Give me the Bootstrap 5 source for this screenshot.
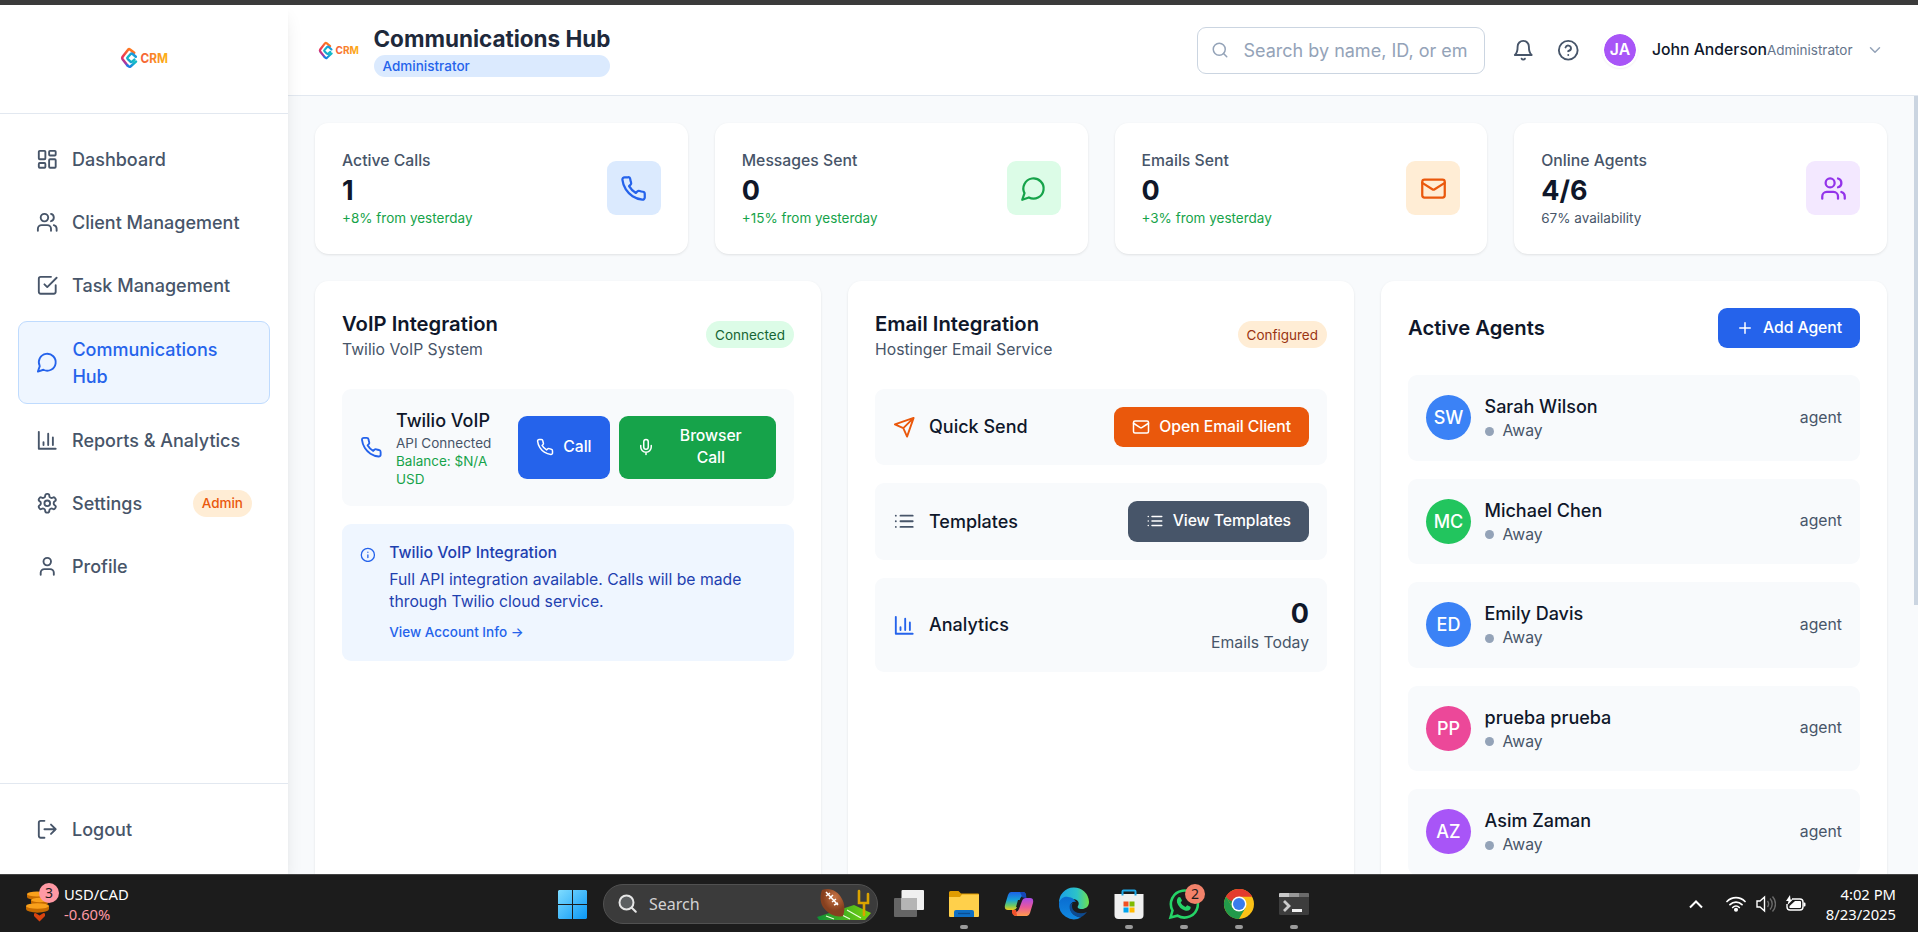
<!DOCTYPE html>
<html lang="en">
<head>
<meta charset="utf-8">
<meta name="viewport" content="width=device-width, initial-scale=1">
<title>Communications Hub</title>
<link rel="stylesheet" href="https://cdn.jsdelivr.net/npm/bootstrap@5.3.0/dist/css/bootstrap.min.css">
<style>
html{font-size:18px}
body{font-family:Inter,"Liberation Sans",sans-serif;height:932px;overflow:hidden;background:#f8fafc;color:#0f172a;line-height:1.5;font-size:18px}
.ico{width:22.5px;height:22.5px;fill:none;stroke:currentColor;stroke-width:2;stroke-linecap:round;stroke-linejoin:round;flex:none;display:block}
.ico-s{width:18px;height:18px}
.ico-l{width:27px;height:27px}
.frame-top{height:5px;background:#3b3b3b;flex:none}
.sidebar{width:288px;background:#fff;box-shadow:0 11px 17px -3px rgba(0,0,0,.1),0 4px 7px -4px rgba(0,0,0,.1);z-index:3;flex:none}
.side-head{height:109px;border-bottom:1px solid #e2e8f0;padding-bottom:2px}
.side-head svg{display:block}
.side-foot{border-top:1px solid #e2e8f0;padding:18px}
.side-nav{padding:18px;gap:9px}
.side-link{display:flex;align-items:center;gap:13.5px;padding:13.5px 18px;border-radius:9px;color:#475569;font-weight:500;text-decoration:none}
.side-link.active{background:#eff6ff;border:1px solid #bfdbfe;color:#2563eb;padding-left:17.4px}
.pill{font-size:13.5px;line-height:18px;padding:4.5px 9px;border-radius:99px;white-space:nowrap}
.pill-orange{background:#ffedd5;color:#ea580c}
.pill-brown{background:#ffedd5;color:#9a3412}
.pill-green{background:#dcfce7;color:#166534}
.topbar{height:91px;background:#fff;border-bottom:1px solid #e2e8f0;padding:0 34px 0 30px;flex:none}
.page-title{font-size:22.5px;line-height:31.5px;font-weight:700;color:#1e293b;margin:0;letter-spacing:-.02px}
.role{background:#dbeafe;color:#2563eb;font-size:13.5px;line-height:18px;font-weight:500;padding:2.25px 9px;border-radius:99px}
.search-box{width:288px;height:47px;border:1px solid #cbd5e1;border-radius:9px;color:#94a3b8;padding:0 0 0 13.5px}
.search-box span{white-space:nowrap;margin-left:.5px}
.me{width:36px;height:36px;border:2px solid #fff;border-radius:50%;background:#a855f7;background-clip:padding-box;color:#fff;font-size:15.75px;font-weight:600;box-shadow:0 1px 2px rgba(0,0,0,.06)}
.content{padding:27px;width:1626px;flex:none}
.panel{background:#fff;border-radius:13.5px;box-shadow:0 1px 3px rgba(0,0,0,.08),0 1px 2px -1px rgba(0,0,0,.08);padding:27px}
.grid4{display:grid;grid-template-columns:repeat(4,1fr);gap:27px}
.grid3{display:grid;grid-template-columns:repeat(3,1fr);gap:27px;margin-top:27px;height:800px}
.t-sm{font-size:15.75px;line-height:22.5px}
.t-xs{font-size:13.5px;line-height:18px}
.muted{color:#475569}
.big{font-size:27px;line-height:36px;font-weight:700}
.green{color:#16a34a}.blue{color:#2563eb}.orange{color:#ea580c}.purple{color:#9333ea}
.tile{width:54px;height:54px;border-radius:9px;display:grid;place-items:center}
.h-card{font-size:20.25px;line-height:31.5px;font-weight:600;margin:0}
.cell-row{background:#f8fafc;border-radius:9px;padding:18px;display:flex;align-items:center;justify-content:space-between}
.gap-x{gap:13.5px}
.bt{border-radius:9px;color:#fff;font-size:15.75px;line-height:22.5px;font-weight:500;padding:9px 18px;gap:9px;display:flex;align-items:center;border:0;white-space:nowrap;letter-spacing:-.07px}
.bt-blue{background:#2563eb}.bt-green{background:#16a34a;width:157.5px}.bt-orange{background:#ea580c}.bt-slate{background:#475569}
.info{background:#eff6ff;border-radius:9px;padding:18px 18px 20px;color:#1e40af}
.ava{width:45px;height:45px;border-radius:50%;color:#fff;font-weight:500;display:grid;place-items:center}
.dot{width:9px;height:9px;border-radius:50%;background:#94a3b8}
.thumb{width:4px;background:#cbd5e1;height:509px;flex:none}
.taskbar{height:58px;background:#1c1c1c;border-top:1px solid #434343;color:#fff;font-family:"Noto Sans","Open Sans",sans-serif;flex:none;z-index:5;font-size:15px;line-height:20px;padding-top:1px}
.tb-left{width:558px;padding-left:25px}
.tb-search{width:275px;height:40px;border-radius:20px;background:#3b3b3b;border:1px solid #515151;color:#d2d2d2;font-size:16px;padding:0 5px 0 14px;margin:0 16px}
.tb-app{width:30px;margin-right:25px;position:relative;height:57px;display:flex;align-items:center;justify-content:center}
.tb-app svg{width:30px;height:30px;overflow:visible}
.tb-app.run::after{content:"";position:absolute;bottom:4px;left:11px;width:8px;height:4px;border-radius:2px;background:#9a9a9a}
.count{position:absolute;width:20px;height:20px;border-radius:50%;color:#1c1c1c;font-size:14px;line-height:20px;text-align:center}
.cond{transform-origin:0 50%;transform:scaleX(.985);white-space:nowrap}
.cond-r{transform-origin:100% 50%}
</style>
</head>
<body class="d-flex flex-column">
<svg width="0" height="0" class="position-absolute" aria-hidden="true">
<defs>
<linearGradient id="lgA" gradientUnits="userSpaceOnUse" x1="3" y1="19" x2="12" y2="3"><stop offset="0" stop-color="#5b3ff0"/><stop offset=".4" stop-color="#e8325c"/><stop offset="1" stop-color="#ff7a1f"/></linearGradient>
<linearGradient id="lgB" gradientUnits="userSpaceOnUse" x1="7" y1="20" x2="16" y2="8"><stop offset="0" stop-color="#1f6fe8"/><stop offset=".6" stop-color="#10bfc4"/><stop offset="1" stop-color="#1e90e0"/></linearGradient>
<linearGradient id="lgT" gradientUnits="userSpaceOnUse" x1="20" y1="0" x2="48" y2="0"><stop offset="0" stop-color="#f4583a"/><stop offset="1" stop-color="#fdb515"/></linearGradient>
</defs>
<symbol id="crm" viewBox="0 0 48 22">
<path d="M14.200 5.800 10 2.500Q9 1.800 8.100 2.700L2.600 9.800Q1.800 11 2.600 12.200L7.300 18.200" fill="none" stroke="url(#lgA)" stroke-width="2.600" stroke-linejoin="round" stroke-linecap="round"/>
<path d="M15.800 9.800 12.400 6.800Q11.500 6.200 10.700 7L7.600 10.300Q6.900 11 7.600 11.800L10.500 14.700Q11.300 15.300 12.200 14.600L14.400 12.600M7.500 18.300 8.600 19.400Q9.500 20.200 10.500 19.500L16 14.600" fill="none" stroke="url(#lgB)" stroke-width="2.500" stroke-linejoin="round" stroke-linecap="round"/>
<text x="20.500" y="15.600" font-family="Inter,sans-serif" font-size="12.800" font-weight="700" textLength="27.500" lengthAdjust="spacingAndGlyphs" fill="url(#lgT)">CRM</text>
</symbol>
<symbol id="dash" viewBox="0 0 24 24"><rect x="3" y="3" width="7" height="9" rx="1"/><rect x="14" y="3" width="7" height="5" rx="1"/><rect x="14" y="12" width="7" height="9" rx="1"/><rect x="3" y="16" width="7" height="5" rx="1"/></symbol>
<symbol id="users" viewBox="0 0 24 24"><path d="M16 21v-2a4 4 0 0 0-4-4H6a4 4 0 0 0-4 4v2"/><circle cx="9" cy="7" r="4"/><path d="M22 21v-2a4 4 0 0 0-3-3.87M16 3.13a4 4 0 0 1 0 7.75"/></symbol>
<symbol id="task" viewBox="0 0 24 24"><path d="m9 11 3 3L22 4M21 12v7a2 2 0 0 1-2 2H5a2 2 0 0 1-2-2V5a2 2 0 0 1 2-2h11"/></symbol>
<symbol id="msg" viewBox="0 0 24 24"><path d="M7.9 20A9 9 0 1 0 4 16.1L2 22Z"/></symbol>
<symbol id="chart" viewBox="0 0 24 24"><path d="M3 3v18h18M18 17V9M13 17V5M8 17v-3"/></symbol>
<symbol id="gear" viewBox="0 0 24 24"><path d="M12.22 2h-.44a2 2 0 0 0-2 2v.18a2 2 0 0 1-1 1.73l-.43.25a2 2 0 0 1-2 0l-.15-.08a2 2 0 0 0-2.73.73l-.22.38a2 2 0 0 0 .73 2.73l.15.1a2 2 0 0 1 1 1.72v.51a2 2 0 0 1-1 1.74l-.15.09a2 2 0 0 0-.73 2.73l.22.38a2 2 0 0 0 2.73.73l.15-.08a2 2 0 0 1 2 0l.43.25a2 2 0 0 1 1 1.73V20a2 2 0 0 0 2 2h.44a2 2 0 0 0 2-2v-.18a2 2 0 0 1 1-1.73l.43-.25a2 2 0 0 1 2 0l.15.08a2 2 0 0 0 2.73-.73l.22-.39a2 2 0 0 0-.73-2.73l-.15-.08a2 2 0 0 1-1-1.74v-.5a2 2 0 0 1 1-1.74l.15-.09a2 2 0 0 0 .73-2.73l-.22-.38a2 2 0 0 0-2.73-.73l-.15.08a2 2 0 0 1-2 0l-.43-.25a2 2 0 0 1-1-1.73V4a2 2 0 0 0-2-2z"/><circle cx="12" cy="12" r="3"/></symbol>
<symbol id="user" viewBox="0 0 24 24"><path d="M19 21v-2a4 4 0 0 0-4-4H9a4 4 0 0 0-4 4v2"/><circle cx="12" cy="7" r="4"/></symbol>
<symbol id="logout" viewBox="0 0 24 24"><path d="M9 21H5a2 2 0 0 1-2-2V5a2 2 0 0 1 2-2h4M16 17l5-5-5-5M21 12H9"/></symbol>
<symbol id="search" viewBox="0 0 24 24"><circle cx="11" cy="11" r="8"/><path d="m21 21-4.3-4.3"/></symbol>
<symbol id="bell" viewBox="0 0 24 24"><path d="M6 8a6 6 0 0 1 12 0c0 7 3 9 3 9H3s3-2 3-9M10.3 21a1.94 1.94 0 0 0 3.4 0"/></symbol>
<symbol id="help" viewBox="0 0 24 24"><circle cx="12" cy="12" r="10"/><path d="M9.09 9a3 3 0 0 1 5.83 1c0 2-3 3-3 3M12 17h.01"/></symbol>
<symbol id="down" viewBox="0 0 24 24"><path d="m6 9 6 6 6-6"/></symbol>
<symbol id="phone" viewBox="0 0 24 24"><path d="M22 16.92v3a2 2 0 0 1-2.18 2 19.79 19.79 0 0 1-8.63-3.07 19.5 19.5 0 0 1-6-6 19.79 19.79 0 0 1-3.07-8.67A2 2 0 0 1 4.11 2h3a2 2 0 0 1 2 1.72 12.84 12.84 0 0 0 .7 2.81 2 2 0 0 1-.45 2.11L8.09 9.91a16 16 0 0 0 6 6l1.27-1.27a2 2 0 0 1 2.11-.45 12.84 12.84 0 0 0 2.81.7A2 2 0 0 1 22 16.92z"/></symbol>
<symbol id="mail" viewBox="0 0 24 24"><rect x="2" y="4" width="20" height="16" rx="2"/><path d="m22 7-8.97 5.7a1.94 1.94 0 0 1-2.06 0L2 7"/></symbol>
<symbol id="mic" viewBox="0 0 24 24"><path d="M12 2a3 3 0 0 0-3 3v7a3 3 0 0 0 6 0V5a3 3 0 0 0-3-3ZM19 10v2a7 7 0 0 1-14 0v-2M12 19v3"/></symbol>
<symbol id="inf" viewBox="0 0 24 24"><circle cx="12" cy="12" r="10"/><path d="M12 16v-4M12 8h.01"/></symbol>
<symbol id="send" viewBox="0 0 24 24"><path d="m22 2-7 20-4-9-9-4ZM22 2 11 13"/></symbol>
<symbol id="lst" viewBox="0 0 24 24"><path d="M8 6h13M8 12h13M8 18h13M3 6h.01M3 12h.01M3 18h.01"/></symbol>
<symbol id="plus" viewBox="0 0 24 24"><path d="M5 12h14M12 5v14"/></symbol>
</svg>

<div class="frame-top"></div>
<div class="d-flex flex-grow-1 overflow-hidden">
  <aside class="sidebar d-flex flex-column">
    <div class="side-head d-flex align-items-center justify-content-center"><svg width="48" height="22"><use href="#crm"/></svg></div>
    <nav class="side-nav d-flex flex-column flex-grow-1">
      <a class="side-link"><svg class="ico"><use href="#dash"/></svg>Dashboard</a>
      <a class="side-link"><svg class="ico"><use href="#users"/></svg>Client Management</a>
      <a class="side-link"><svg class="ico"><use href="#task"/></svg>Task Management</a>
      <a class="side-link active"><svg class="ico"><use href="#msg"/></svg><span>Communications<br>Hub</span></a>
      <a class="side-link"><svg class="ico"><use href="#chart"/></svg>Reports &amp; Analytics</a>
      <a class="side-link"><svg class="ico"><use href="#gear"/></svg>Settings<span class="pill pill-orange ms-auto">Admin</span></a>
      <a class="side-link"><svg class="ico"><use href="#user"/></svg>Profile</a>
    </nav>
    <div class="side-foot"><a class="side-link"><svg class="ico"><use href="#logout"/></svg>Logout</a></div>
  </aside>

  <div class="d-flex flex-column flex-grow-1 overflow-hidden">
    <header class="topbar d-flex align-items-center">
      <svg width="41" height="19" viewBox="0 0 48 22"><use href="#crm"/></svg>
      <div class="d-flex flex-column" style="margin-left:14.5px">
        <h1 class="page-title">Communications Hub</h1>
        <span class="role">Administrator</span>
      </div>
      <div class="search-box d-flex align-items-center ms-auto gap-x"><svg class="ico ico-s"><use href="#search"/></svg><span>Search by name, ID, or em</span></div>
      <svg class="ico muted" style="margin-left:27px"><use href="#bell"/></svg>
      <svg class="ico muted" style="margin-left:22.5px"><use href="#help"/></svg>
      <div class="me d-grid align-items-center text-center" style="margin-left:22.5px">JA</div>
      <div class="d-flex align-items-baseline" style="margin-left:14px"><span class="t-sm" style="font-weight:500">John Anderson</span><span class="t-xs" style="color:#64748b">Administrator</span></div>
      <svg class="ico ico-s" style="margin-left:13.5px;color:#94a3b8"><use href="#down"/></svg>
    </header>

    <div class="d-flex flex-grow-1 overflow-hidden">
      <main class="content">
        <section class="grid4">
          <div class="panel d-flex align-items-center justify-content-between">
            <div><div class="t-sm muted fw-medium">Active Calls</div><div class="big">1</div><div class="t-xs green">+8% from yesterday</div></div>
            <div class="tile blue" style="background:#dbeafe"><svg class="ico ico-l"><use href="#phone"/></svg></div>
          </div>
          <div class="panel d-flex align-items-center justify-content-between">
            <div><div class="t-sm muted fw-medium">Messages Sent</div><div class="big">0</div><div class="t-xs green">+15% from yesterday</div></div>
            <div class="tile green" style="background:#dcfce7"><svg class="ico ico-l"><use href="#msg"/></svg></div>
          </div>
          <div class="panel d-flex align-items-center justify-content-between">
            <div><div class="t-sm muted fw-medium">Emails Sent</div><div class="big">0</div><div class="t-xs green">+3% from yesterday</div></div>
            <div class="tile orange" style="background:#ffedd5"><svg class="ico ico-l"><use href="#mail"/></svg></div>
          </div>
          <div class="panel d-flex align-items-center justify-content-between">
            <div><div class="t-sm muted fw-medium">Online Agents</div><div class="big">4/6</div><div class="t-xs muted">67% availability</div></div>
            <div class="tile purple" style="background:#f3e8ff"><svg class="ico ico-l"><use href="#users"/></svg></div>
          </div>
        </section>

        <section class="grid3">
          <div class="panel">
            <div class="d-flex align-items-center justify-content-between">
              <div><h2 class="h-card">VoIP Integration</h2><div class="t-sm muted">Twilio VoIP System</div></div>
              <span class="pill pill-green">Connected</span>
            </div>
            <div class="cell-row" style="margin-top:27px">
              <div class="d-flex align-items-center gap-x">
                <svg class="ico blue"><use href="#phone"/></svg>
                <div><div style="font-weight:500">Twilio VoIP</div><div class="t-xs muted">API Connected</div><div class="t-xs green">Balance: $N/A<br>USD</div></div>
              </div>
              <div class="d-flex" style="gap:9px">
                <button class="bt bt-blue"><svg class="ico ico-s"><use href="#phone"/></svg>Call</button>
                <button class="bt bt-green"><svg class="ico ico-s"><use href="#mic"/></svg><span class="flex-grow-1 text-center">Browser<br>Call</span></button>
              </div>
            </div>
            <div class="info d-flex" style="margin-top:18px;gap:13.5px">
              <svg class="ico blue" style="width:15.75px;height:15.75px;margin-top:5px"><use href="#inf"/></svg>
              <div>
                <div class="t-sm" style="font-weight:500">Twilio VoIP Integration</div>
                <div class="t-sm" style="margin-top:4.5px">Full API integration available. Calls will be made<br>through Twilio cloud service.</div>
                <div class="t-xs blue" style="margin-top:9.500px;font-weight:500">View Account Info →</div>
              </div>
            </div>
          </div>

          <div class="panel d-flex flex-column" style="gap:18px">
            <div class="d-flex align-items-center justify-content-between" style="margin-bottom:9px">
              <div><h2 class="h-card">Email Integration</h2><div class="t-sm muted">Hostinger Email Service</div></div>
              <span class="pill pill-brown">Configured</span>
            </div>
            <div class="cell-row">
              <div class="d-flex align-items-center gap-x"><svg class="ico orange"><use href="#send"/></svg><span style="font-weight:500">Quick Send</span></div>
              <button class="bt bt-orange"><svg class="ico ico-s"><use href="#mail"/></svg>Open Email Client</button>
            </div>
            <div class="cell-row">
              <div class="d-flex align-items-center gap-x"><svg class="ico muted"><use href="#lst"/></svg><span style="font-weight:500">Templates</span></div>
              <button class="bt bt-slate"><svg class="ico ico-s"><use href="#lst"/></svg>View Templates</button>
            </div>
            <div class="cell-row">
              <div class="d-flex align-items-center gap-x"><svg class="ico blue"><use href="#chart"/></svg><span style="font-weight:500">Analytics</span></div>
              <div class="text-end"><div class="big">0</div><div class="t-sm muted">Emails Today</div></div>
            </div>
          </div>

          <div class="panel d-flex flex-column" style="gap:18px">
            <div class="d-flex align-items-center justify-content-between" style="margin-bottom:9px">
              <h2 class="h-card">Active Agents</h2>
              <button class="bt bt-blue"><svg class="ico ico-s"><use href="#plus"/></svg>Add Agent</button>
            </div>
            <div class="cell-row"><div class="d-flex align-items-center gap-x"><div class="ava" style="background:#3b82f6">SW</div><div><div style="font-weight:500">Sarah Wilson</div><div class="t-sm muted d-flex align-items-center" style="gap:9px"><i class="dot"></i>Away</div></div></div><span class="t-sm muted">agent</span></div>
            <div class="cell-row"><div class="d-flex align-items-center gap-x"><div class="ava" style="background:#22c55e">MC</div><div><div style="font-weight:500">Michael Chen</div><div class="t-sm muted d-flex align-items-center" style="gap:9px"><i class="dot"></i>Away</div></div></div><span class="t-sm muted">agent</span></div>
            <div class="cell-row"><div class="d-flex align-items-center gap-x"><div class="ava" style="background:#3b82f6">ED</div><div><div style="font-weight:500">Emily Davis</div><div class="t-sm muted d-flex align-items-center" style="gap:9px"><i class="dot"></i>Away</div></div></div><span class="t-sm muted">agent</span></div>
            <div class="cell-row"><div class="d-flex align-items-center gap-x"><div class="ava" style="background:#ec4899">PP</div><div><div style="font-weight:500">prueba prueba</div><div class="t-sm muted d-flex align-items-center" style="gap:9px"><i class="dot"></i>Away</div></div></div><span class="t-sm muted">agent</span></div>
            <div class="cell-row"><div class="d-flex align-items-center gap-x"><div class="ava" style="background:#a855f7">AZ</div><div><div style="font-weight:500">Asim Zaman</div><div class="t-sm muted d-flex align-items-center" style="gap:9px"><i class="dot"></i>Away</div></div></div><span class="t-sm muted">agent</span></div>
          </div>
        </section>
      </main>
      <div class="thumb"></div>
    </div>
  </div>
</div>

<footer class="taskbar d-flex align-items-center">
  <div class="tb-left d-flex align-items-center">
    <div class="position-relative" style="width:39px;height:40px">
      <svg width="26" height="40" viewBox="0 0 26 40"><g fill="#c66a00"><path d="M2 10v3a10 3 0 0 0 20 0v-3z"/><path d="M6 16v3a8 2.500 0 0 0 17 0v-3z"/><path d="M1 22v3a11 3.500 0 0 0 23 0v-3z"/></g><g fill="#f9a01b"><ellipse cx="12" cy="10" rx="10" ry="2.500"/><ellipse cx="14.500" cy="16" rx="8.500" ry="2.200"/><ellipse cx="12.500" cy="22" rx="11.500" ry="2.700"/></g><path d="M9 29.500l1.500-.5 4 2.500 4-2.500 1.500.5v2.500l-5.500 5.500L9 32z" fill="#d9440f"/></svg>
      <span class="count" style="left:14px;top:-1px;background:#ff99a4">3</span>
    </div>
    <div><div class="cond">USD/CAD</div><div class="cond" style="color:#ff99a4">-0.60%</div></div>
  </div>
  <svg width="29" height="29" viewBox="0 0 29 29"><defs><linearGradient id="win" x1="0" y1="0" x2="1" y2="1"><stop offset="0" stop-color="#7fdcff"/><stop offset="1" stop-color="#0a97f5"/></linearGradient></defs><path fill="url(#win)" d="M1 0h13v14H0V1zM15 0h13l1 1v13H15zM0 15h14v14H1l-1-1zM15 15h14v13l-1 1H15z"/></svg>
  <div class="tb-search d-flex align-items-center">
    <svg width="20" height="20" viewBox="0 0 20 20" fill="#5c5f61" stroke="#e6e6e6" stroke-width="2" stroke-linecap="round"><circle cx="8.500" cy="8.500" r="7"/><path d="m13.800 13.800 4 4"/></svg>
    <span style="margin-left:11px">Search</span>
    <svg class="ms-auto" width="56" height="34" viewBox="0 0 56 34"><defs><linearGradient id="grs"><stop offset="0" stop-color="#0f8f35"/><stop offset="1" stop-color="#7ad60c"/></linearGradient><radialGradient id="bal" cx=".6" cy=".3"><stop offset="0" stop-color="#c77445"/><stop offset="1" stop-color="#86401f"/></radialGradient></defs><path d="M1 30 38 18l17 8-6 7H3z" fill="url(#grs)"/><path d="m10 29 8 3M22 26l12 6M31 23l14 8" stroke="#e8ffd8" stroke-width="1.200"/><path d="M6 3c8-3 16 1 20 9 3 5 3 12 1 17-7 2-15-2-20-9-3-5-3-12-1-17z" fill="url(#bal)"/><path d="m10 5 12 13M10 9l4-3M13 12l4-4M16 15l4-3M18 18l4-2" stroke="#fff" stroke-width="1.500"/><path d="M43 4v12h9V7M48 16v12" fill="none" stroke="#dba300" stroke-width="2.600" stroke-linecap="round"/></svg>
  </div>
  <div class="tb-app"><svg viewBox="0 0 30 30"><rect x="0" y="9" width="23" height="19" rx="1" fill="#656565"/><rect x="7.500" y="1" width="22.500" height="20" rx="1" fill="#f0f0f0"/><path d="M7.500 9H23v12H7.500z" fill="#b5b5b5"/></svg></div>
  <div class="tb-app run"><svg viewBox="0 0 30 30"><path d="M0 3.500Q0 2 1.500 2h8L12 4.500h17q1 0 1 1v5H0z" fill="#e09c00"/><path d="M0 8h11l2-2.500h17v21.500q0 1-1 1H1q-1 0-1-1z" fill="#ffd04b"/><path d="M5 28v-5q0-2 2-2h16q2 0 2 2v5z" fill="#0f6fc4"/><path d="M9 24.500h12" stroke="#0b4d91" stroke-width="1.300"/></svg></div>
  <div class="tb-app"><svg viewBox="0 0 30 30"><defs><linearGradient id="cpA" x1="0" y1="0" x2="0" y2="1"><stop offset="0" stop-color="#1c62e8"/><stop offset=".45" stop-color="#18a4d8"/><stop offset=".75" stop-color="#6cc864"/><stop offset="1" stop-color="#f0cc1c"/></linearGradient><linearGradient id="cpB" x1="0" y1="0" x2="0" y2="1"><stop offset="0" stop-color="#a84be8"/><stop offset=".5" stop-color="#e8589c"/><stop offset="1" stop-color="#ff9b4a"/></linearGradient></defs><path d="M7 3h12q3 0 3 4h-3q-2 0-3 3l-3 8q-1 3-4 3H4q-4 0-3-5L4 6q1-3 3-3z" fill="url(#cpA)"/><path d="M23 27H12q-3 0-3-4h2q3 0 4-3l3-8q1-3 4-3h4q4 0 3 5l-3 10q-1 3-3 3z" fill="url(#cpB)"/><path d="M16 3h3q3 0 3.500 6l-4-.5z" fill="#1546b8"/><path d="M8 21h4l1 6q-4 0-5-3z" fill="#f0502a"/><path d="m14 11-2 7h3l2-7z" fill="#1c1c1c"/></svg></div>
  <div class="tb-app"><svg viewBox="0 0 30 30"><defs><linearGradient id="edA"><stop offset="0" stop-color="#1aa0e8"/><stop offset=".6" stop-color="#2cc3c8"/><stop offset="1" stop-color="#6fe04c"/></linearGradient><linearGradient id="edB" x1="0" y1="0" x2="0" y2="1"><stop offset="0" stop-color="#0a6cd0"/><stop offset="1" stop-color="#1188e0"/></linearGradient></defs><path d="M0 14A15 15 0 0 1 30 13c0 5-4 7-7 7-4 0-5-1.500-4-3 2-3 0-7-5-7C7 9 0 12 0 14z" fill="url(#edA)"/><path d="M0 14c1-4 5-7 9-6 4 0 7 3 8 5-3-1-6 1-6 5 0 5 5 10 11 10.500A15 15 0 0 1 0 14z" fill="url(#edB)"/><path d="M11 15c-2 7 3 12 10 13.500 3-1 5-3 7-5.500-8 3-15 0-15-6 0-1 0-2 1-3z" fill="#0e4a8f"/></svg></div>
  <div class="tb-app run"><svg viewBox="0 0 30 30"><path d="M.5 5h29v21q0 4-4 4h-21q-4 0-4-4z" fill="#f0f0f0"/><path d="M8.500 6.500V2.500q0-1 1-1h11q1 0 1 1v4" fill="none" stroke="#1fa8e8" stroke-width="2"/><path d="M9.500 12.500h5v5h-5z" fill="#f25022"/><path d="M15.500 12.500h5v5h-5z" fill="#7fba00"/><path d="M9.500 18.500h5v5h-5z" fill="#00a4ef"/><path d="M15.500 18.500h5v5h-5z" fill="#ffb900"/></svg></div>
  <div class="tb-app run"><svg viewBox="0 0 30 30"><path d="M1.500 28.500 3.500 21.500A13.500 13.500 0 1 1 8.500 26.700z" fill="none" stroke="#25d366" stroke-width="2.600"/><path d="M9 8.500q1.500-1 2.500 0l1.500 3-1.300 2.200q1.500 3 4.800 4.300l1.700-1.700 3.300 1.500q.6 1.200-.5 2.700-2 2-5 1-6-2-8-8-.5-3 1-5z" fill="#25d366"/></svg><span class="count" style="left:16px;top:8px;background:#f2826a">2</span></div>
  <div class="tb-app run"><svg viewBox="0 0 30 30"><circle cx="15" cy="15" r="15" fill="#fbc116"/><path d="M15 15 2 7.500A15 15 0 0 1 28 7.500H15z" fill="#e33b2e"/><path d="M2 7.500A15 15 0 0 0 15 30l6.500-11.200L15 15 8.500 18.700z" fill="#229a4a"/><path d="M2 7.500 8.500 18.700 12 9z" fill="#229a4a"/><path d="M2 7.500Q6 2 15 0q9 1 13 7.500H15a7.500 7.500 0 0 0-7 5L4 10z" fill="#e33b2e"/><circle cx="15" cy="15" r="7.500" fill="#fff"/><circle cx="15" cy="15" r="6" fill="#3a7cec"/></svg></div>
  <div class="tb-app run"><svg viewBox="0 0 30 30"><rect y="4" width="30" height="22" rx="1.500" fill="#3d3d3d"/><path d="M0 8V5q0-1 1-1h9v4z" fill="#c9c9c9"/><path d="M10 4h10v4H10z" fill="#999"/><path d="M20 4h9q1 0 1 1v3H20z" fill="#6b6b6b"/><path d="m5 12 5 5-5 5" fill="none" stroke="#ccc" stroke-width="2.800"/><path d="M13 20h10v3H13z" fill="#f0f0f0"/></svg></div>
  <div class="d-flex align-items-center ms-auto" style="padding-right:22px">
    <svg width="14" height="9" viewBox="0 0 14 9" fill="none" stroke="#fff" stroke-width="2"><path d="m1 7.500 6-6 6 6"/></svg>
    <svg style="margin-left:23px" width="20" height="16" viewBox="0 0 20 16" fill="none" stroke="#fff" stroke-width="1.700" stroke-linecap="round"><path d="M1 5.500a12.500 12.500 0 0 1 18 0M4 8.700a8.500 8.500 0 0 1 12 0M6.700 11.500a4.700 4.700 0 0 1 6.600 0"/><circle cx="10" cy="13.800" r="1.200" fill="#fff"/></svg>
    <svg style="margin-left:10px" width="20" height="18" viewBox="0 0 20 18" fill="none" stroke="#fff" stroke-width="1.400"><path d="M1 6h3l4.500-4v14L4 12H1z"/><path stroke="#6b6b6b" d="M11.500 6a5 5 0 0 1 0 6M14 3.500a8 8 0 0 1 0 11M16.500 1.500a11 11 0 0 1 0 15"/></svg>
    <svg style="margin-left:10px" width="20" height="18" viewBox="0 0 20 18"><path d="M6 4h8q3 0 3 3v5q0 3-3 3H4q-3 0-3-3V9" fill="none" stroke="#fff" stroke-width="1.400"/><path d="M3.500 13v-2L9 6h5q1 0 1 1v5q0 1-1 1z" fill="#fff"/><path d="M17.500 7.500h1q1 0 1 1v2q0 1-1 1h-1zM4 0 0 6h2.500L1.500 10 7 4.500H4.500z" fill="#fff"/></svg>
    <div class="text-end" style="width:90px"><div class="cond cond-r">4:02 PM</div><div class="cond cond-r">8/23/2025</div></div>
  </div>
</footer>
<script src="https://cdn.jsdelivr.net/npm/bootstrap@5.3.0/dist/js/bootstrap.bundle.min.js"></script>
</body>
</html>
